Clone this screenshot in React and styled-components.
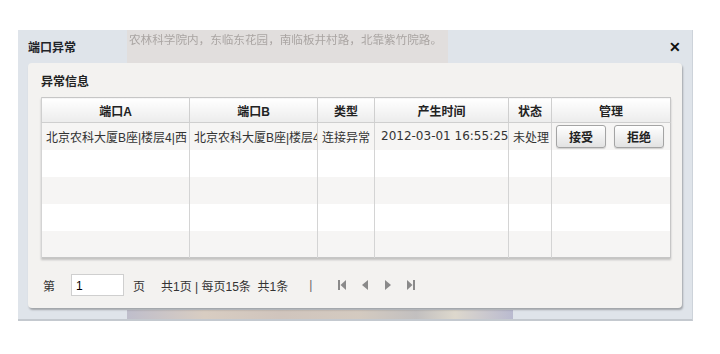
import React from "react";
import styled, { createGlobalStyle } from "styled-components";

const rows = [
    { a: "北京农科大厦B座|楼层4|西", b: "北京农科大厦B座|楼层4", type: "连接异常", time: "2012-03-01 16:55:25", status: "未处理" },
    null,
    null,
    null,
    null,
];

const columns = [
    { key: "a", label: "端口A", width: 148 },
    { key: "b", label: "端口B", width: 128 },
    { key: "type", label: "类型", width: 57 },
    { key: "time", label: "产生时间", width: 134 },
    { key: "status", label: "状态", width: 43 },
    { key: "manage", label: "管理", width: 119 },
];

export default function App() {
    return (
        <>
            <GlobalStyle/>
            <Page>
                <Dialog>
                    <TitleBar>
                        <Title>端口异常</Title>
                        {/* texte de la page derrière, visible par transparence */}
                        <GhostText>农林科学院内，东临东花园，南临板井村路，北靠紫竹院路。</GhostText>
                        <Close>✕</Close>
                    </TitleBar>

                    <Panel>
                        <Heading>异常信息</Heading>
                        <Grid>
                            <colgroup>
                                {columns.map((c) => (
                                    <col key={c.key} style={{width: c.width}}/>
                                ))}
                            </colgroup>
                            <thead>
                            <tr>
                                {columns.map((c) => (
                                    <Th key={c.key}>{c.label}</Th>
                                ))}
                            </tr>
                            </thead>
                            <tbody>
                            {rows.map((r, i) => (
                                <Row key={i} $odd={i % 2 === 0}>
                                    {r ? (
                                        <>
                                            <Td>{r.a}</Td>
                                            <Td>{r.b}</Td>
                                            <Td>{r.type}</Td>
                                            <Td $num>{r.time}</Td>
                                            <Td>{r.status}</Td>
                                            <Td>
                                                <Actions>
                                                    <ActionButton>接受</ActionButton>
                                                    <ActionButton>拒绝</ActionButton>
                                                </Actions>
                                            </Td>
                                        </>
                                    ) : (
                                        columns.map((c) => <Td key={c.key}/>)
                                    )}
                                </Row>
                            ))}
                            </tbody>
                        </Grid>

                        <Pager>
                            <span>第</span>
                            <PageInput defaultValue="1"/>
                            <span>页</span>
                            <Info>共1页 | 每页15条&nbsp;&nbsp;共1条</Info>
                            <Sep>|</Sep>
                            <Nav>
                                <NavIcon viewBox="0 0 10 12">
                                    <rect x="1" y="1" width="2" height="10"/>
                                    <polygon points="9,1 3.5,6 9,11"/>
                                </NavIcon>
                                <NavIcon viewBox="0 0 10 12">
                                    <polygon points="8,1 2,6 8,11"/>
                                </NavIcon>
                                <NavIcon viewBox="0 0 10 12">
                                    <polygon points="2,1 8,6 2,11"/>
                                </NavIcon>
                                <NavIcon viewBox="0 0 10 12">
                                    <polygon points="1,1 6.5,6 1,11"/>
                                    <rect x="7" y="1" width="2" height="10"/>
                                </NavIcon>
                            </Nav>
                        </Pager>
                    </Panel>
                    <GhostStrip/>
                </Dialog>
            </Page>
        </>
    );
}

/* ====== STYLES ====== */

const GlobalStyle = createGlobalStyle`
    body {
        margin: 0;
        background: #ffffff;
        font-family: "Liberation Sans", "Noto Sans CJK SC", sans-serif;
        font-size: 12px;
        color: #333;
    }
`;

const Page = styled.div`
    padding: 30px 0 0 18px;
`;

const Dialog = styled.div`
    position: relative;
    width: 675px;
    height: 291px;
    box-sizing: border-box;
    background: #dfe4ea;
    border-right: 1px solid #cdd3da;
    border-bottom: 2px solid #c4c9cf;
    display: flex;
    flex-direction: column;
`;

const TitleBar = styled.div`
    position: relative;
    height: 33px;
    display: flex;
    align-items: center;
    padding: 0 10px;
`;

const Title = styled.div`
    font-weight: 700;
    font-size: 12px;
    color: #1f2328;
    flex: 1;
    position: relative;
    z-index: 1;
`;

const GhostText = styled.div`
    position: absolute;
    left: 109px;
    top: 0;
    width: 321px;
    height: 33px;
    background: #e1dedd;
    color: #aaa5a3;
    font-size: 11.6px;
    line-height: 20px;
    padding-left: 2px;
    box-sizing: border-box;
    white-space: nowrap;
    filter: blur(0.7px);
`;

const Close = styled.div`
    font-size: 14px;
    font-weight: 700;
    color: #111;
    margin-right: 1px;
    position: relative;
    z-index: 1;
`;

const Panel = styled.div`
    margin: 0 10px;
    height: 245px;
    box-sizing: border-box;
    background: #f3f2f0;
    border-radius: 4px;
    box-shadow: 1px 2px 2px rgba(0, 0, 0, 0.28);
    padding: 12px 13px 0;
    position: relative;
    z-index: 1;
`;

const Heading = styled.div`
    font-weight: 700;
    color: #222;
    height: 22px;
    line-height: 14px;
`;

const Grid = styled.table`
    width: 629px;
    border-collapse: collapse;
    table-layout: fixed;
    border: 1px solid #c6c6c6;
    box-shadow: 0 2px 2px rgba(0, 0, 0, 0.2);
    background: #fff;
`;

const Th = styled.th`
    height: 24px;
    padding: 0;
    font-weight: 700;
    color: #222;
    text-align: center;
    border-left: 1px solid #cfcfcf;
    border-bottom: 1px solid #cfcfcf;
    background: linear-gradient(#ffffff, #ececec);
`;

const Row = styled.tr`
    height: 27px;
    background: ${(p) => (p.$odd ? "#f6f5f4" : "#ffffff")};
`;

const Td = styled.td`
    padding: 0 0 0 ${(p) => (p.$num ? "6px" : "4px")};
    border-left: 1px solid #d4d4d4;
    white-space: nowrap;
    overflow: hidden;
    color: #333;
    font-family: ${(p) => (p.$num ? '"DejaVu Sans", sans-serif' : "inherit")};
    font-size: 12px;
    vertical-align: middle;
`;

const Actions = styled.div`
    display: flex;
    gap: 8px;
`;

const ActionButton = styled.button`
    width: 50px;
    height: 23px;
    padding: 0;
    font: 700 12px "Liberation Sans", "Noto Sans CJK SC", sans-serif;
    color: #222;
    border: 1px solid #a4a4a4;
    border-radius: 3px;
    background: linear-gradient(#ffffff, #e2e2e2);
    box-shadow: 0 1px 1px rgba(0, 0, 0, 0.15);
`;

const Pager = styled.div`
    display: flex;
    align-items: center;
    height: 30px;
    margin-top: 12px;
    padding-left: 2px;
    color: #333;

    & > span {
        margin-right: 16px;
    }
`;

const PageInput = styled.input`
    width: 53px;
    height: 22px;
    box-sizing: border-box;
    border: 1px solid #cfcfcf;
    background: #fff;
    font: 12px "Liberation Sans", sans-serif;
    padding: 2px 4px 0;
    margin-right: 9px;
`;

const Info = styled.div`
    white-space: pre;
`;

const Sep = styled.div`
    margin-left: 21px;
    color: #666;
`;

const Nav = styled.div`
    display: flex;
    align-items: center;
    gap: 13px;
    margin-left: 25px;
`;

const NavIcon = styled.svg`
    width: 10px;
    height: 12px;
    fill: #8a8a8a;
`;

/* bande floue de la page derrière, visible sous le panneau */
const GhostStrip = styled.div`
    position: absolute;
    left: 109px;
    bottom: 0;
    width: 386px;
    height: 9px;
    background: linear-gradient(90deg, #b9b7c6, #d7c9bb 20%, #cdbfb5 40%, #d2c6b9 60%, #bdb9b8 75%, #ddd6c8 85%, #b3b3cb);
    opacity: 0.85;
`;
